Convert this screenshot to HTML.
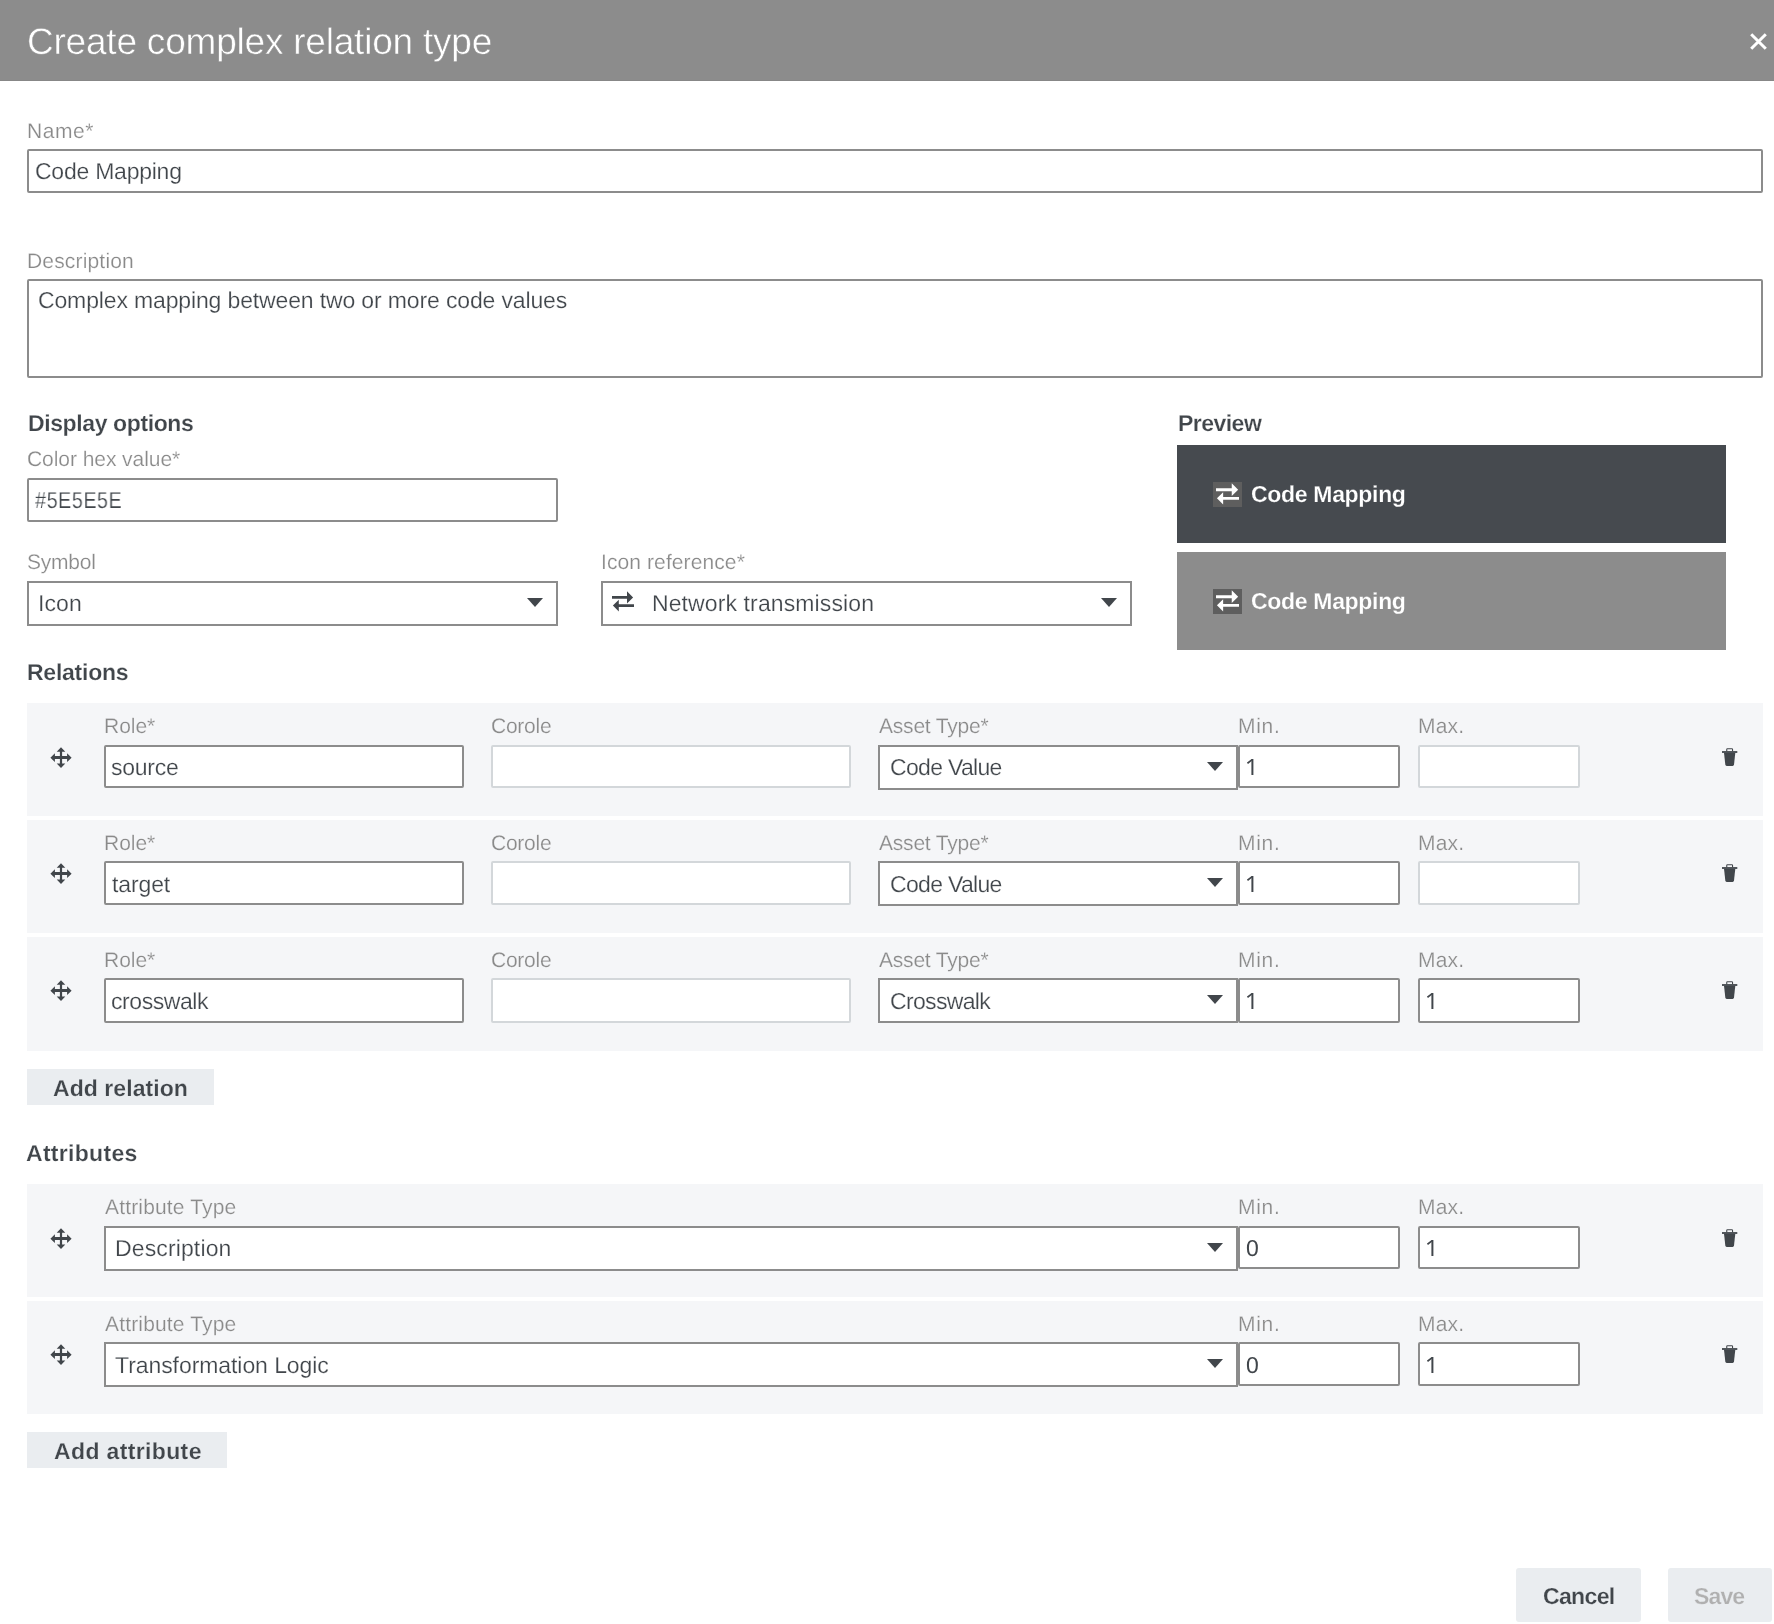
<!DOCTYPE html><html><head><meta charset="utf-8"><title>Create complex relation type</title><style>
html,body{margin:0;padding:0;} body{width:1774px;height:1624px;position:relative;overflow:hidden;background:#fff;font-family:"Liberation Sans", sans-serif;}
.t{position:absolute;white-space:nowrap;line-height:1;will-change:transform;text-rendering:geometricPrecision;}
.b{position:absolute;display:block;}
</style></head><body>
<div class="b" style="left:0px;top:0px;width:1774px;height:80px;background:#8c8c8c;"></div>
<div class="b" style="left:0px;top:80px;width:1774px;height:1px;background:#878787;"></div>
<div class="t" style="left:26.7px;top:23px;font-size:37px;color:#ffffff;letter-spacing:-0.21px;-webkit-text-stroke:0.5px #8c8c8c;">Create complex relation type</div>
<svg class="b" style="left:1750px;top:33px" width="17" height="17" viewBox="0 0 17 17"><path d="M1.2 1.2L15.8 15.8M15.8 1.2L1.2 15.8" stroke="#fff" stroke-width="3"/></svg>
<div class="t" style="left:26.8px;top:121px;font-size:21px;color:#8a8a8a;letter-spacing:0.55px;-webkit-text-stroke:0.2px #fff;">Name*</div>
<div class="b" style="left:27px;top:149px;width:1736px;height:44px;background:#fff;border:2px solid #8c8c8c;box-sizing:border-box;border-radius:2px;"></div>
<div class="t" style="left:34.5px;top:160px;font-size:23px;color:#41464b;letter-spacing:-0.24px;-webkit-text-stroke:0.2px #fff;">Code Mapping</div>
<div class="t" style="left:26.9px;top:251px;font-size:21px;color:#8a8a8a;letter-spacing:0.17px;-webkit-text-stroke:0.2px #fff;">Description</div>
<div class="b" style="left:27px;top:279px;width:1736px;height:99px;background:#fff;border:2px solid #8c8c8c;box-sizing:border-box;border-radius:2px;"></div>
<div class="t" style="left:38.0px;top:289px;font-size:23px;color:#41464b;letter-spacing:-0.14px;-webkit-text-stroke:0.2px #fff;">Complex mapping between two or more code values</div>
<div class="t" style="left:27.6px;top:412px;font-size:23px;color:#41464b;font-weight:bold;letter-spacing:-0.39px;-webkit-text-stroke:0.2px #fff;">Display options</div>
<div class="t" style="left:26.8px;top:449px;font-size:21px;color:#8a8a8a;letter-spacing:-0.06px;-webkit-text-stroke:0.2px #fff;">Color hex value*</div>
<div class="b" style="left:27px;top:478px;width:531px;height:44px;background:#fff;border:2px solid #8c8c8c;box-sizing:border-box;border-radius:2px;"></div>
<div class="t" style="left:35.0px;top:489px;font-size:23px;color:#41464b;letter-spacing:0.61px;-webkit-text-stroke:0.2px #fff;transform:scaleX(0.86);transform-origin:0 0;">#5E5E5E</div>
<div class="t" style="left:26.8px;top:552px;font-size:21px;color:#8a8a8a;letter-spacing:-0.22px;-webkit-text-stroke:0.2px #fff;">Symbol</div>
<div class="b" style="left:27px;top:581px;width:531px;height:45px;background:#fff;border:2px solid #8c8c8c;box-sizing:border-box;"></div>
<div class="t" style="left:37.8px;top:592px;font-size:23px;color:#41464b;letter-spacing:0.10px;-webkit-text-stroke:0.2px #fff;">Icon</div>
<svg class="b" style="left:527px;top:598px" width="16" height="9" viewBox="0 0 16 9"><path d="M0 0H16L8 9Z" fill="#41464b"/></svg>
<div class="t" style="left:600.6px;top:552px;font-size:21px;color:#8a8a8a;letter-spacing:0.10px;-webkit-text-stroke:0.2px #fff;">Icon reference*</div>
<div class="b" style="left:601px;top:581px;width:531px;height:45px;background:#fff;border:2px solid #8c8c8c;box-sizing:border-box;"></div>
<svg class="b" style="left:612px;top:591px" width="22.0" height="21.0" viewBox="0 0 22 21"><path fill="#41464b" d="M0 4.9H15V0.2L21.1 6.4L15 12.4V7.8H0Z"/><path fill="#41464b" d="M22 13.2H6.8V8.8L0.9 14.6L6.8 20.5V15.9H22Z"/></svg>
<div class="t" style="left:651.5px;top:592px;font-size:23px;color:#41464b;letter-spacing:0.11px;-webkit-text-stroke:0.2px #fff;">Network transmission</div>
<svg class="b" style="left:1101px;top:598px" width="16" height="9" viewBox="0 0 16 9"><path d="M0 0H16L8 9Z" fill="#41464b"/></svg>
<div class="t" style="left:1178.2px;top:412px;font-size:23px;color:#41464b;font-weight:bold;letter-spacing:-0.53px;-webkit-text-stroke:0.2px #fff;">Preview</div>
<div class="b" style="left:1177px;top:445px;width:549px;height:98px;background:#464a4f;"></div>
<div class="b" style="left:1213px;top:482px;width:29px;height:25px;background:#5e5e5e;"></div>
<svg class="b" style="left:1216px;top:483px" width="23.1" height="22.1" viewBox="0 0 22 21"><path fill="#fff" d="M0 4.9H15V0.2L21.1 6.4L15 12.4V7.8H0Z"/><path fill="#fff" d="M22 13.2H6.8V8.8L0.9 14.6L6.8 20.5V15.9H22Z"/></svg>
<div class="t" style="left:1250.5px;top:483px;font-size:23px;color:#fff;font-weight:bold;letter-spacing:-0.32px;-webkit-text-stroke:0.2px #464a4f;">Code Mapping</div>
<div class="b" style="left:1177px;top:552px;width:549px;height:98px;background:#8c8c8c;"></div>
<div class="b" style="left:1213px;top:589px;width:29px;height:25px;background:#5e5e5e;"></div>
<svg class="b" style="left:1216px;top:590px" width="23.1" height="22.1" viewBox="0 0 22 21"><path fill="#fff" d="M0 4.9H15V0.2L21.1 6.4L15 12.4V7.8H0Z"/><path fill="#fff" d="M22 13.2H6.8V8.8L0.9 14.6L6.8 20.5V15.9H22Z"/></svg>
<div class="t" style="left:1250.5px;top:590px;font-size:23px;color:#fff;font-weight:bold;letter-spacing:-0.32px;-webkit-text-stroke:0.2px #8c8c8c;">Code Mapping</div>
<div class="t" style="left:26.7px;top:661px;font-size:23px;color:#41464b;font-weight:bold;letter-spacing:-0.24px;-webkit-text-stroke:0.2px #fff;">Relations</div>
<div class="b" style="left:27px;top:703px;width:1736px;height:113px;background:#f5f6f8;"></div>
<svg class="b" style="left:50px;top:747px" width="22" height="22" viewBox="0 0 22 22"><path fill="#41464b" d="M11 0.3L15.3 4.8H12.1V9.1H17.1V6.3L21.6 10.7L17.1 15.1V11.9H12.1V16.6H15.3L11 21.1L6.7 16.6H9.9V11.9H4.9V15.1L0.4 10.7L4.9 6.3V9.1H9.9V4.8H6.7Z"/></svg>
<div class="t" style="left:104.1px;top:716px;font-size:21px;color:#8a8a8a;letter-spacing:-0.02px;-webkit-text-stroke:0.2px #f5f6f8;">Role*</div>
<div class="t" style="left:491.4px;top:716px;font-size:21px;color:#8a8a8a;letter-spacing:-0.24px;-webkit-text-stroke:0.2px #f5f6f8;">Corole</div>
<div class="t" style="left:878.9px;top:716px;font-size:21px;color:#8a8a8a;letter-spacing:-0.21px;-webkit-text-stroke:0.2px #f5f6f8;">Asset Type*</div>
<div class="t" style="left:1238.0px;top:716px;font-size:21px;color:#8a8a8a;letter-spacing:0.73px;-webkit-text-stroke:0.2px #f5f6f8;">Min.</div>
<div class="t" style="left:1417.7px;top:716px;font-size:21px;color:#8a8a8a;letter-spacing:0.17px;-webkit-text-stroke:0.2px #f5f6f8;">Max.</div>
<div class="b" style="left:104px;top:745px;width:360px;height:43px;background:#fff;border:2px solid #8c8c8c;box-sizing:border-box;border-radius:2px;"></div>
<div class="t" style="left:111.4px;top:756px;font-size:23px;color:#41464b;letter-spacing:-0.24px;-webkit-text-stroke:0.2px #fff;">source</div>
<div class="b" style="left:491px;top:745px;width:360px;height:43px;background:#fff;border:2px solid #d3d7da;box-sizing:border-box;border-radius:2px;"></div>
<div class="b" style="left:878px;top:745px;width:360px;height:45px;background:#fff;border:2px solid #8c8c8c;box-sizing:border-box;"></div>
<div class="t" style="left:889.6px;top:756px;font-size:23px;color:#41464b;letter-spacing:-0.68px;-webkit-text-stroke:0.2px #fff;">Code Value</div>
<svg class="b" style="left:1207px;top:762px" width="16" height="9" viewBox="0 0 16 9"><path d="M0 0H16L8 9Z" fill="#41464b"/></svg>
<div class="b" style="left:1238px;top:745px;width:162px;height:43px;background:#fff;border:2px solid #8c8c8c;box-sizing:border-box;border-radius:2px;"></div>
<svg class="b" style="left:1247px;top:759px" width="8" height="16" viewBox="0 0 8 16"><path d="M5.4 0V16" stroke="#41464b" stroke-width="2"/><path d="M0.5 4.3L5.2 0.7" stroke="#41464b" stroke-width="1.7"/></svg>
<div class="b" style="left:1418px;top:745px;width:162px;height:43px;background:#fff;border:2px solid #d3d7da;box-sizing:border-box;border-radius:2px;"></div>
<svg class="b" style="left:1722px;top:748px" width="16" height="19" viewBox="0 0 16 19"><path fill="#41464b" d="M4.2 3.2V1.4Q4.2 0.2 5.4 0.2H9.9Q11.1 0.2 11.1 1.4V3.2H10V1.3H5.3V3.2Z"/><rect x="0" y="3.1" width="15.3" height="1.8" fill="#41464b"/><path fill="#41464b" d="M2 4.8H13.3L12 16.6Q11.8 18 10.6 18H4.7Q3.5 18 3.3 16.6Z"/></svg>
<div class="b" style="left:27px;top:820px;width:1736px;height:113px;background:#f5f6f8;"></div>
<svg class="b" style="left:50px;top:863px" width="22" height="22" viewBox="0 0 22 22"><path fill="#41464b" d="M11 0.3L15.3 4.8H12.1V9.1H17.1V6.3L21.6 10.7L17.1 15.1V11.9H12.1V16.6H15.3L11 21.1L6.7 16.6H9.9V11.9H4.9V15.1L0.4 10.7L4.9 6.3V9.1H9.9V4.8H6.7Z"/></svg>
<div class="t" style="left:104.1px;top:833px;font-size:21px;color:#8a8a8a;letter-spacing:-0.02px;-webkit-text-stroke:0.2px #f5f6f8;">Role*</div>
<div class="t" style="left:491.4px;top:833px;font-size:21px;color:#8a8a8a;letter-spacing:-0.24px;-webkit-text-stroke:0.2px #f5f6f8;">Corole</div>
<div class="t" style="left:878.9px;top:833px;font-size:21px;color:#8a8a8a;letter-spacing:-0.21px;-webkit-text-stroke:0.2px #f5f6f8;">Asset Type*</div>
<div class="t" style="left:1238.0px;top:833px;font-size:21px;color:#8a8a8a;letter-spacing:0.73px;-webkit-text-stroke:0.2px #f5f6f8;">Min.</div>
<div class="t" style="left:1417.7px;top:833px;font-size:21px;color:#8a8a8a;letter-spacing:0.17px;-webkit-text-stroke:0.2px #f5f6f8;">Max.</div>
<div class="b" style="left:104px;top:861px;width:360px;height:44px;background:#fff;border:2px solid #8c8c8c;box-sizing:border-box;border-radius:2px;"></div>
<div class="t" style="left:112.4px;top:873px;font-size:23px;color:#41464b;letter-spacing:-0.12px;-webkit-text-stroke:0.2px #fff;">target</div>
<div class="b" style="left:491px;top:861px;width:360px;height:44px;background:#fff;border:2px solid #d3d7da;box-sizing:border-box;border-radius:2px;"></div>
<div class="b" style="left:878px;top:861px;width:360px;height:45px;background:#fff;border:2px solid #8c8c8c;box-sizing:border-box;"></div>
<div class="t" style="left:889.6px;top:873px;font-size:23px;color:#41464b;letter-spacing:-0.68px;-webkit-text-stroke:0.2px #fff;">Code Value</div>
<svg class="b" style="left:1207px;top:878px" width="16" height="9" viewBox="0 0 16 9"><path d="M0 0H16L8 9Z" fill="#41464b"/></svg>
<div class="b" style="left:1238px;top:861px;width:162px;height:44px;background:#fff;border:2px solid #8c8c8c;box-sizing:border-box;border-radius:2px;"></div>
<svg class="b" style="left:1247px;top:876px" width="8" height="16" viewBox="0 0 8 16"><path d="M5.4 0V16" stroke="#41464b" stroke-width="2"/><path d="M0.5 4.3L5.2 0.7" stroke="#41464b" stroke-width="1.7"/></svg>
<div class="b" style="left:1418px;top:861px;width:162px;height:44px;background:#fff;border:2px solid #d3d7da;box-sizing:border-box;border-radius:2px;"></div>
<svg class="b" style="left:1722px;top:864px" width="16" height="19" viewBox="0 0 16 19"><path fill="#41464b" d="M4.2 3.2V1.4Q4.2 0.2 5.4 0.2H9.9Q11.1 0.2 11.1 1.4V3.2H10V1.3H5.3V3.2Z"/><rect x="0" y="3.1" width="15.3" height="1.8" fill="#41464b"/><path fill="#41464b" d="M2 4.8H13.3L12 16.6Q11.8 18 10.6 18H4.7Q3.5 18 3.3 16.6Z"/></svg>
<div class="b" style="left:27px;top:937px;width:1736px;height:114px;background:#f5f6f8;"></div>
<svg class="b" style="left:50px;top:980px" width="22" height="22" viewBox="0 0 22 22"><path fill="#41464b" d="M11 0.3L15.3 4.8H12.1V9.1H17.1V6.3L21.6 10.7L17.1 15.1V11.9H12.1V16.6H15.3L11 21.1L6.7 16.6H9.9V11.9H4.9V15.1L0.4 10.7L4.9 6.3V9.1H9.9V4.8H6.7Z"/></svg>
<div class="t" style="left:104.1px;top:950px;font-size:21px;color:#8a8a8a;letter-spacing:-0.02px;-webkit-text-stroke:0.2px #f5f6f8;">Role*</div>
<div class="t" style="left:491.4px;top:950px;font-size:21px;color:#8a8a8a;letter-spacing:-0.24px;-webkit-text-stroke:0.2px #f5f6f8;">Corole</div>
<div class="t" style="left:878.9px;top:950px;font-size:21px;color:#8a8a8a;letter-spacing:-0.21px;-webkit-text-stroke:0.2px #f5f6f8;">Asset Type*</div>
<div class="t" style="left:1238.0px;top:950px;font-size:21px;color:#8a8a8a;letter-spacing:0.73px;-webkit-text-stroke:0.2px #f5f6f8;">Min.</div>
<div class="t" style="left:1417.7px;top:950px;font-size:21px;color:#8a8a8a;letter-spacing:0.17px;-webkit-text-stroke:0.2px #f5f6f8;">Max.</div>
<div class="b" style="left:104px;top:978px;width:360px;height:45px;background:#fff;border:2px solid #8c8c8c;box-sizing:border-box;border-radius:2px;"></div>
<div class="t" style="left:111.4px;top:990px;font-size:23px;color:#41464b;letter-spacing:-0.43px;-webkit-text-stroke:0.2px #fff;">crosswalk</div>
<div class="b" style="left:491px;top:978px;width:360px;height:45px;background:#fff;border:2px solid #d3d7da;box-sizing:border-box;border-radius:2px;"></div>
<div class="b" style="left:878px;top:978px;width:360px;height:45px;background:#fff;border:2px solid #8c8c8c;box-sizing:border-box;"></div>
<div class="t" style="left:889.6px;top:990px;font-size:23px;color:#41464b;letter-spacing:-0.67px;-webkit-text-stroke:0.2px #fff;">Crosswalk</div>
<svg class="b" style="left:1207px;top:995px" width="16" height="9" viewBox="0 0 16 9"><path d="M0 0H16L8 9Z" fill="#41464b"/></svg>
<div class="b" style="left:1238px;top:978px;width:162px;height:45px;background:#fff;border:2px solid #8c8c8c;box-sizing:border-box;border-radius:2px;"></div>
<svg class="b" style="left:1247px;top:993px" width="8" height="16" viewBox="0 0 8 16"><path d="M5.4 0V16" stroke="#41464b" stroke-width="2"/><path d="M0.5 4.3L5.2 0.7" stroke="#41464b" stroke-width="1.7"/></svg>
<div class="b" style="left:1418px;top:978px;width:162px;height:45px;background:#fff;border:2px solid #8c8c8c;box-sizing:border-box;border-radius:2px;"></div>
<svg class="b" style="left:1427px;top:993px" width="8" height="16" viewBox="0 0 8 16"><path d="M5.4 0V16" stroke="#41464b" stroke-width="2"/><path d="M0.5 4.3L5.2 0.7" stroke="#41464b" stroke-width="1.7"/></svg>
<svg class="b" style="left:1722px;top:981px" width="16" height="19" viewBox="0 0 16 19"><path fill="#41464b" d="M4.2 3.2V1.4Q4.2 0.2 5.4 0.2H9.9Q11.1 0.2 11.1 1.4V3.2H10V1.3H5.3V3.2Z"/><rect x="0" y="3.1" width="15.3" height="1.8" fill="#41464b"/><path fill="#41464b" d="M2 4.8H13.3L12 16.6Q11.8 18 10.6 18H4.7Q3.5 18 3.3 16.6Z"/></svg>
<div class="b" style="left:27px;top:1069px;width:187px;height:36px;background:#eaedf0;"></div>
<div class="t" style="left:53.0px;top:1077px;font-size:23px;color:#41464b;font-weight:bold;letter-spacing:0.06px;-webkit-text-stroke:0.2px #eaedf0;">Add relation</div>
<div class="t" style="left:26.4px;top:1142px;font-size:23px;color:#41464b;font-weight:bold;letter-spacing:0.30px;-webkit-text-stroke:0.2px #fff;">Attributes</div>
<div class="b" style="left:27px;top:1184px;width:1736px;height:113px;background:#f5f6f8;"></div>
<svg class="b" style="left:50px;top:1228px" width="22" height="22" viewBox="0 0 22 22"><path fill="#41464b" d="M11 0.3L15.3 4.8H12.1V9.1H17.1V6.3L21.6 10.7L17.1 15.1V11.9H12.1V16.6H15.3L11 21.1L6.7 16.6H9.9V11.9H4.9V15.1L0.4 10.7L4.9 6.3V9.1H9.9V4.8H6.7Z"/></svg>
<div class="t" style="left:104.9px;top:1197px;font-size:21px;color:#8a8a8a;letter-spacing:0.16px;-webkit-text-stroke:0.2px #f5f6f8;">Attribute Type</div>
<div class="t" style="left:1238.0px;top:1197px;font-size:21px;color:#8a8a8a;letter-spacing:0.73px;-webkit-text-stroke:0.2px #f5f6f8;">Min.</div>
<div class="t" style="left:1417.7px;top:1197px;font-size:21px;color:#8a8a8a;letter-spacing:0.17px;-webkit-text-stroke:0.2px #f5f6f8;">Max.</div>
<div class="b" style="left:104px;top:1226px;width:1134px;height:45px;background:#fff;border:2px solid #8c8c8c;box-sizing:border-box;"></div>
<div class="t" style="left:114.7px;top:1237px;font-size:23px;color:#41464b;letter-spacing:0.13px;-webkit-text-stroke:0.2px #fff;">Description</div>
<svg class="b" style="left:1207px;top:1243px" width="16" height="9" viewBox="0 0 16 9"><path d="M0 0H16L8 9Z" fill="#41464b"/></svg>
<div class="b" style="left:1238px;top:1226px;width:162px;height:43px;background:#fff;border:2px solid #8c8c8c;box-sizing:border-box;border-radius:2px;"></div>
<div class="t" style="left:1246px;top:1237px;font-size:23px;color:#41464b">0</div>
<div class="b" style="left:1418px;top:1226px;width:162px;height:43px;background:#fff;border:2px solid #8c8c8c;box-sizing:border-box;border-radius:2px;"></div>
<svg class="b" style="left:1427px;top:1240px" width="8" height="16" viewBox="0 0 8 16"><path d="M5.4 0V16" stroke="#41464b" stroke-width="2"/><path d="M0.5 4.3L5.2 0.7" stroke="#41464b" stroke-width="1.7"/></svg>
<svg class="b" style="left:1722px;top:1229px" width="16" height="19" viewBox="0 0 16 19"><path fill="#41464b" d="M4.2 3.2V1.4Q4.2 0.2 5.4 0.2H9.9Q11.1 0.2 11.1 1.4V3.2H10V1.3H5.3V3.2Z"/><rect x="0" y="3.1" width="15.3" height="1.8" fill="#41464b"/><path fill="#41464b" d="M2 4.8H13.3L12 16.6Q11.8 18 10.6 18H4.7Q3.5 18 3.3 16.6Z"/></svg>
<div class="b" style="left:27px;top:1301px;width:1736px;height:113px;background:#f5f6f8;"></div>
<svg class="b" style="left:50px;top:1344px" width="22" height="22" viewBox="0 0 22 22"><path fill="#41464b" d="M11 0.3L15.3 4.8H12.1V9.1H17.1V6.3L21.6 10.7L17.1 15.1V11.9H12.1V16.6H15.3L11 21.1L6.7 16.6H9.9V11.9H4.9V15.1L0.4 10.7L4.9 6.3V9.1H9.9V4.8H6.7Z"/></svg>
<div class="t" style="left:104.9px;top:1314px;font-size:21px;color:#8a8a8a;letter-spacing:0.16px;-webkit-text-stroke:0.2px #f5f6f8;">Attribute Type</div>
<div class="t" style="left:1238.0px;top:1314px;font-size:21px;color:#8a8a8a;letter-spacing:0.73px;-webkit-text-stroke:0.2px #f5f6f8;">Min.</div>
<div class="t" style="left:1417.7px;top:1314px;font-size:21px;color:#8a8a8a;letter-spacing:0.17px;-webkit-text-stroke:0.2px #f5f6f8;">Max.</div>
<div class="b" style="left:104px;top:1342px;width:1134px;height:45px;background:#fff;border:2px solid #8c8c8c;box-sizing:border-box;"></div>
<div class="t" style="left:115.4px;top:1354px;font-size:23px;color:#41464b;letter-spacing:-0.07px;-webkit-text-stroke:0.2px #fff;">Transformation Logic</div>
<svg class="b" style="left:1207px;top:1359px" width="16" height="9" viewBox="0 0 16 9"><path d="M0 0H16L8 9Z" fill="#41464b"/></svg>
<div class="b" style="left:1238px;top:1342px;width:162px;height:44px;background:#fff;border:2px solid #8c8c8c;box-sizing:border-box;border-radius:2px;"></div>
<div class="t" style="left:1246px;top:1354px;font-size:23px;color:#41464b">0</div>
<div class="b" style="left:1418px;top:1342px;width:162px;height:44px;background:#fff;border:2px solid #8c8c8c;box-sizing:border-box;border-radius:2px;"></div>
<svg class="b" style="left:1427px;top:1357px" width="8" height="16" viewBox="0 0 8 16"><path d="M5.4 0V16" stroke="#41464b" stroke-width="2"/><path d="M0.5 4.3L5.2 0.7" stroke="#41464b" stroke-width="1.7"/></svg>
<svg class="b" style="left:1722px;top:1345px" width="16" height="19" viewBox="0 0 16 19"><path fill="#41464b" d="M4.2 3.2V1.4Q4.2 0.2 5.4 0.2H9.9Q11.1 0.2 11.1 1.4V3.2H10V1.3H5.3V3.2Z"/><rect x="0" y="3.1" width="15.3" height="1.8" fill="#41464b"/><path fill="#41464b" d="M2 4.8H13.3L12 16.6Q11.8 18 10.6 18H4.7Q3.5 18 3.3 16.6Z"/></svg>
<div class="b" style="left:27px;top:1432px;width:200px;height:36px;background:#eaedf0;"></div>
<div class="t" style="left:53.5px;top:1440px;font-size:23px;color:#41464b;font-weight:bold;letter-spacing:0.36px;-webkit-text-stroke:0.2px #eaedf0;">Add attribute</div>
<div class="b" style="left:1516px;top:1568px;width:125px;height:54px;background:#eaedf0;border-radius:3px;"></div>
<div class="t" style="left:1542.7px;top:1585px;font-size:23px;color:#41464b;font-weight:bold;letter-spacing:-0.64px;-webkit-text-stroke:0.2px #eaedf0;">Cancel</div>
<div class="b" style="left:1668px;top:1568px;width:104px;height:54px;background:#eaedf0;border-radius:3px;"></div>
<div class="t" style="left:1694.4px;top:1585px;font-size:23px;color:#b0b0b0;font-weight:bold;letter-spacing:-0.87px;-webkit-text-stroke:0.2px #eaedf0;">Save</div>
</body></html>
